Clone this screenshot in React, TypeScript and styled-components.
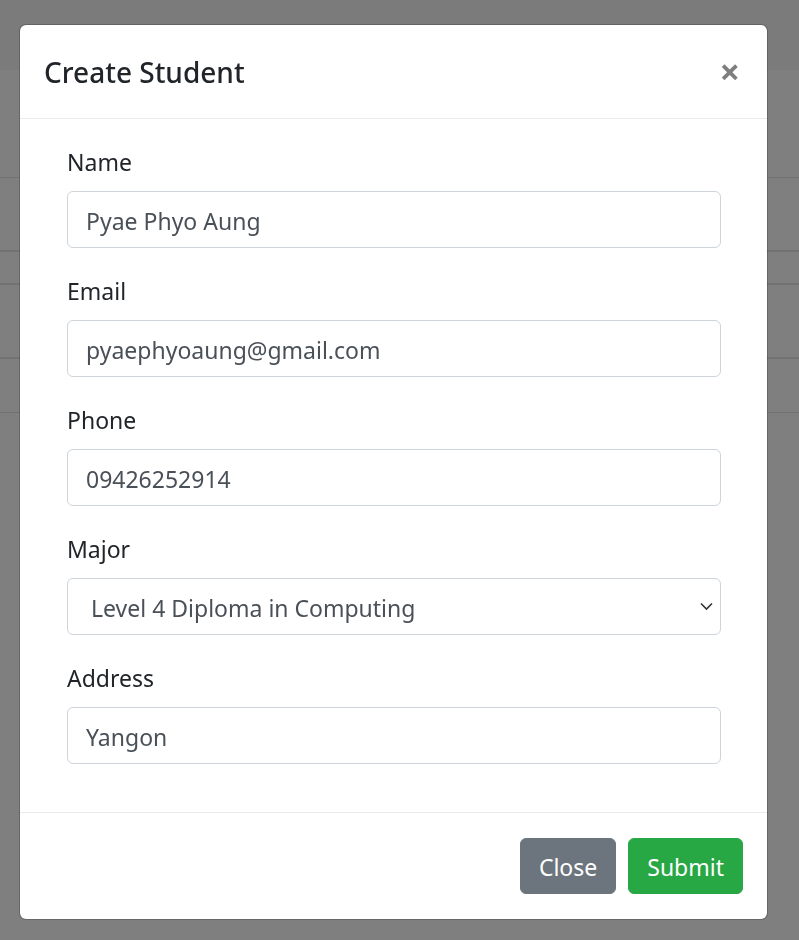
import React from 'react'
import styled, { createGlobalStyle } from 'styled-components'

const GlobalStyle = createGlobalStyle`
    html, body {
        margin: 0;
        padding: 0;
        background: #ffffff;
    }
    body {
        font-family: "Noto Sans", "Open Sans", sans-serif;
        color: #212529;
        overflow: hidden;
    }
    * {
        box-sizing: border-box;
    }
`

type RowProps = {
    height: number;
    thick?: boolean;
}

const Page = styled.div`
    width: 799px;
    height: 940px;
    display: flex;
    flex-direction: column;
`

const NavBar = styled.div`
    height: 70px;
    background-color: #f6f6f6;
`

const PageGap = styled.div`
    height: 107px;
`

const TableRow = styled.div <RowProps>`
    height: ${props => props.height}px;
    border-top: ${props => (props.thick ? 2 : 1)}px solid #e2e4e7;
`

const Backdrop = styled.div`
    position: fixed;
    inset: 0;
    background-color: rgba(0, 0, 0, 0.5);
    padding: 24px 31px 0 19px;
`

const Dialog = styled.div`
    width: 749px;
    background-color: #fff;
    border: 1px solid rgba(0, 0, 0, 0.2);
    border-radius: 7px;
    display: flex;
    flex-direction: column;
    background-clip: padding-box;
`

const Header = styled.div`
    display: flex;
    align-items: flex-start;
    justify-content: space-between;
    padding: 24px;
    border-bottom: 1px solid #e9ecef;
`

const Title = styled.h5`
    margin: 0;
    padding-top: 1px;
    font-size: 28px;
    font-weight: 500;
    line-height: 44px;
    color: #212529;
`

const CloseX = styled.button`
    margin: -24px -21px -24px auto;
    padding: 24px;
    background: transparent;
    border: 0;
    font-family: "Noto Sans", sans-serif;
    font-size: 36px;
    font-weight: 700;
    line-height: 1;
    color: #000;
    opacity: 0.5;
    text-shadow: 0 1px 0 #fff;
    cursor: pointer;
    height: 93px;
    display: flex;
    align-items: center;
`

const Body = styled.div`
    padding: 24px 46px 24px 47px;
`

const Group = styled.div`
    display: flex;
    flex-direction: column;
    margin-bottom: 24px;
`

const Label = styled.label`
    font-size: 23px;
    line-height: 36px;
    padding-top: 1px;
    height: 36px;
    margin-bottom: 12px;
    color: #212529;
`

const Input = styled.input`
    height: 57px;
    width: 100%;
    padding: 10px 18px 8px;
    font-family: "Noto Sans", sans-serif;
    font-size: 23px;
    line-height: 36px;
    color: #495057;
    background-color: #fff;
    border: 1px solid #ced4da;
    border-radius: 6px;
    outline: none;
`

const SelectWrap = styled.div`
    position: relative;
`

const Select = styled.select`
    appearance: none;
    height: 57px;
    width: 100%;
    padding: 10px 40px 8px 23px;
    font-family: "Noto Sans", sans-serif;
    font-size: 23px;
    line-height: 36px;
    color: #495057;
    background-color: #fff;
    border: 1px solid #ced4da;
    border-radius: 6px;
    outline: none;
`

const Chevron = styled.svg`
    position: absolute;
    right: 8px;
    top: 24px;
    pointer-events: none;
`

const Footer = styled.div`
    display: flex;
    justify-content: flex-end;
    align-items: center;
    padding: 19px 18px;
    border-top: 1px solid #e9ecef;
`

type BtnProps = {
    bgcolor: string;
}

const Button = styled.button <BtnProps>`
    margin: 6px;
    padding: 10px 18px 8px;
    height: 56px;
    font-family: "Noto Sans", sans-serif;
    font-size: 23px;
    line-height: 36px;
    color: #fff;
    background-color: ${props => props.bgcolor};
    border: 1px solid ${props => props.bgcolor};
    border-radius: 6px;
    cursor: pointer;
`

const fields = [
    { label: 'Name', value: 'Pyae Phyo Aung' },
    { label: 'Email', value: 'pyaephyoaung@gmail.com' },
    { label: 'Phone', value: '09426252914' },
]

export default function App() {
    return (
        <>
            <GlobalStyle />
            <Page>
                <NavBar />
                <PageGap />
                <TableRow height={73} />
                <TableRow height={33} thick />
                <TableRow height={74} thick />
                <TableRow height={55} thick />
                <TableRow height={60} />
            </Page>
            <Backdrop>
                <Dialog>
                    <Header>
                        <Title>Create Student</Title>
                        <CloseX type="button">×</CloseX>
                    </Header>
                    <Body>
                        {fields.map(f => (
                            <Group key={f.label}>
                                <Label>{f.label}</Label>
                                <Input defaultValue={f.value} />
                            </Group>
                        ))}
                        <Group>
                            <Label>Major</Label>
                            <SelectWrap>
                                <Select defaultValue="l4">
                                    <option value="l4">Level 4 Diploma in Computing</option>
                                    <option value="l5">Level 5 Diploma in Computing</option>
                                </Select>
                                <Chevron width="13" height="9" viewBox="0 0 13 9">
                                    <path d="M1 1.5 L6.5 7 L12 1.5" fill="none" stroke="#333" strokeWidth="1.6" />
                                </Chevron>
                            </SelectWrap>
                        </Group>
                        <Group>
                            <Label>Address</Label>
                            <Input defaultValue="Yangon" />
                        </Group>
                    </Body>
                    <Footer>
                        <Button bgcolor="#6c757d">Close</Button>
                        <Button bgcolor="#28a745">Submit</Button>
                    </Footer>
                </Dialog>
            </Backdrop>
        </>
    )
}
